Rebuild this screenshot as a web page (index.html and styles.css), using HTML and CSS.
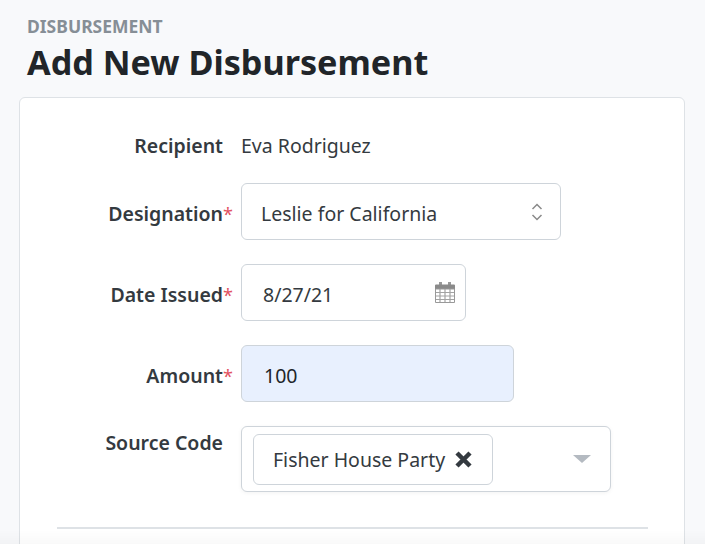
FILE: index.html
```html
<!DOCTYPE html>
<html>
<head>
    <link rel="stylesheet" href="styles.css">
</head>
<body>
<div class="page">
    <header class="page-header">
        <div class="eyebrow">DISBURSEMENT</div>
        <h1>Add New Disbursement</h1>
    </header>
    <div class="card">
        <form class="form">
            <div class="row row-static">
                <div class="label">Recipient</div>
                <div class="value">Eva Rodriguez</div>
            </div>
            <div class="row">
                <label class="label">Designation<span class="req">*</span></label>
                <div class="control control-select">
                    <span>Leslie for California</span>
                    <svg class="chevrons" width="14" height="22" viewBox="0 0 14 22">
                        <path d="M2.500 8 7 3.500 11.500 8M2.500 14 7 18.500 11.500 14" fill="none" stroke="#8a8a8a" stroke-width="1.500"/>
                    </svg>
                </div>
            </div>
            <div class="row">
                <label class="label">Date Issued<span class="req">*</span></label>
                <div class="control control-date">
                    <span>8/27/21</span>
                    <svg class="calendar" width="20" height="21" viewBox="0 0 20 21">
                        <rect x="4" y="0" width="3" height="4" fill="#999"/>
                        <rect x="13" y="0" width="3" height="4" fill="#999"/>
                        <path d="M0 3.500A1 1 0 0 1 1 2.500H19A1 1 0 0 1 20 3.500V7H0Z" fill="#8a8a8a"/>
                        <path d="M.5 7H19.500V20.500H.5Z" fill="#fff" stroke="#999"/>
                        <path d="M5 7V20M10 7V20M15 7V20M1 10.500H19M1 14H19M1 17.500H19" stroke="#a3a3a3" stroke-width="1.200"/>
                    </svg>
                </div>
            </div>
            <div class="row">
                <label class="label">Amount<span class="req">*</span></label>
                <div class="control control-amount">100</div>
            </div>
            <div class="row row-source">
                <label class="label">Source Code</label>
                <div class="control control-tags">
                    <div class="token">
                        <span>Fisher House Party</span>
                        <svg class="remove" width="17" height="17" viewBox="0 0 17 17">
                            <path d="M2 2 15 15M15 2 2 15" stroke="#343a40" stroke-width="4.500"/>
                        </svg>
                    </div>
                    <span class="caret"></span>
                </div>
            </div>
            <hr class="divider">
        </form>
    </div>
</div>
<div class="bottom-fade"></div>
</body>
</html>
```

FILE: styles.css
```css
html, body {
    margin: 0;
    height: 100%;
    overflow: hidden;
}

body {
    background: #f8f9fb;
    color: #212529;
    font-family: "Noto Sans", "Open Sans", sans-serif;
    font-size: 19.5px;
}

.page {
    padding: 14px 20px 0 19px;
}

.page-header {
    padding-left: 8px;
    margin-bottom: 12px;
}

.eyebrow {
    color: #868e96;
    font-size: 17.500px;
    font-weight: 700;
    line-height: 24px;
}

h1 {
    margin: 0;
    font-size: 34.200px;
    font-weight: 700;
    line-height: 47px;
}

.card {
    background: #fff;
    border: 1px solid #dee2e6;
    border-radius: 6px;
    height: 460px;
    box-sizing: border-box;
}

.form {
    padding: 30px 36px 0 37px;
}

.row {
    display: flex;
    align-items: center;
    margin-bottom: 24px;
}

.row-static {
    margin-bottom: 19px;
    line-height: 36px;
}

.row-source {
    align-items: flex-start;
    margin-bottom: 35px;
}

.label {
    box-sizing: border-box;
    width: 166px;
    padding-top: 3px;
    text-align: right;
    color: #343a40;
    font-weight: 600;
    flex: none;
}

.row-static .label, .row-source .label {
    padding-top: 0;
}

.row-source .label {
    line-height: 34px;
}

.req {
    display: inline-block;
    width: 8px;
    margin-right: -8px;
    color: #e2535f;
    font-size: 18px;
    font-weight: 400;
    text-align: left;
}

.value {
    margin-left: 18px;
    color: #343a40;
}

.control {
    margin-left: 18px;
    box-sizing: border-box;
    height: 57px;
    border: 1px solid #ced4da;
    border-radius: 6px;
    display: flex;
    align-items: center;
    justify-content: space-between;
    color: #343a40;
    background: #fff;
}

.control-select > span, .control-date > span {
    padding-top: 3px;
}

.control-select {
    width: 320px;
    padding: 0 16px 0 19px;
}

.control-date {
    width: 225px;
    padding: 0 10px 0 21px;
}

.control-amount {
    width: 273px;
    padding: 3px 0 0 22px;
    background: #e8f0fe;
    color: #212529;
}

.control-tags {
    width: 370px;
    height: 66px;
    padding: 0 19px 0 11px;
    box-shadow: 0 1px 4px rgba(0, 0, 0, .05);
}

.token {
    box-sizing: border-box;
    width: 240px;
    height: 51px;
    border: 1px solid #ced4da;
    border-radius: 6px;
    padding: 0 20px 0 19px;
    display: flex;
    align-items: center;
    justify-content: space-between;
}

.caret {
    border-left: 9px solid transparent;
    border-right: 9px solid transparent;
    border-top: 8px solid #b4bac1;
}

.divider {
    margin: 0;
    border: 0;
    border-top: 2px solid #dee2e6;
}

.bottom-fade {
    position: fixed;
    left: 0;
    right: 0;
    bottom: 0;
    height: 14px;
    background: linear-gradient(rgba(0, 0, 0, 0), rgba(0, 0, 0, .025));
}
```
